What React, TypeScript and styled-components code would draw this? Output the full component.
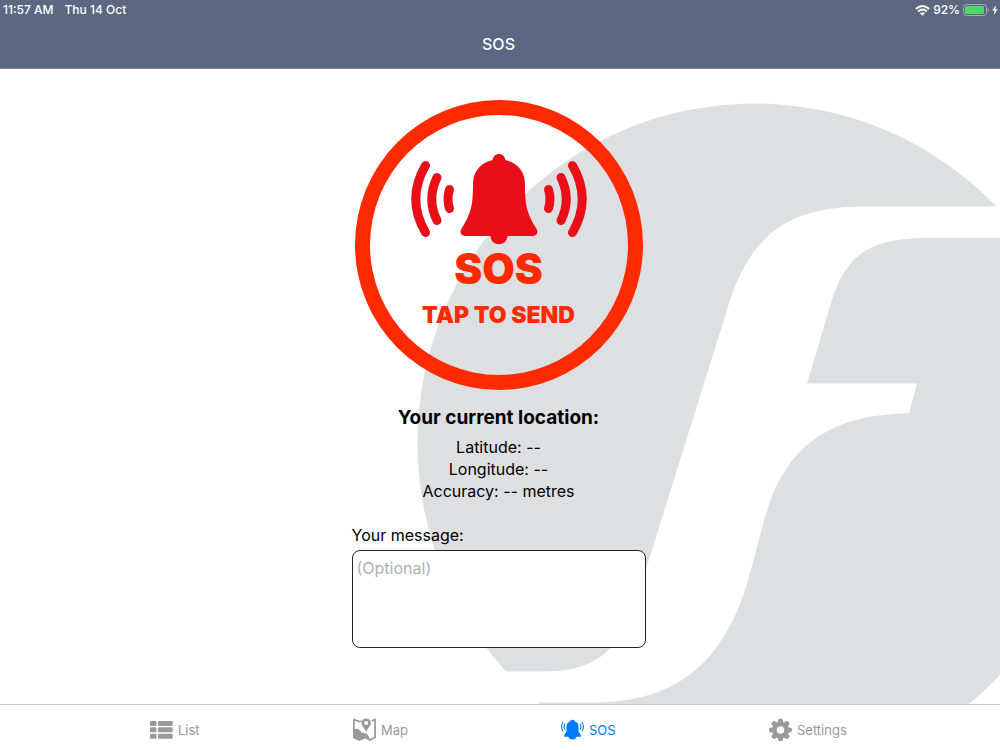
import React from "react";
import styled, { createGlobalStyle } from "styled-components";

const GlobalStyle = createGlobalStyle`
  *, *::before, *::after { box-sizing: border-box; }
  html, body { margin: 0; }
  body {
    background: #fff;
    color: #000;
    font-family: Inter, "Liberation Sans", sans-serif;
  }
`;

const Screen = styled.div`
  display: flex;
  flex-direction: column;
  min-height: 100vh;
`;

const Header = styled.header`
  height: 69px;
  background: #5c6781;
  border-bottom: 1px solid #7d8699;
  color: #fff;
`;

const StatusBar = styled.div`
  display: flex;
  align-items: center;
  justify-content: space-between;
  height: 20px;
  padding: 0 2px 0 3px;
  font-size: 12px;
  font-weight: 500;
  line-height: 20px;
`;

const StatusGroup = styled.div<{ $gap: number }>`
  display: flex;
  align-items: center;
  gap: ${(p) => p.$gap}px;
`;

const Title = styled.h1`
  margin: 0;
  padding-right: 3px;
  font-size: 16px;
  font-weight: 500;
  line-height: 48px;
  text-align: center;
`;

const Main = styled.main`
  position: relative;
  flex: 1;
  display: flex;
  flex-direction: column;
  align-items: center;
  padding: 31px 3px 24px 0;
  overflow: hidden;
`;

const Watermark = styled.svg`
  position: absolute;
  top: 0;
  right: 0;
  z-index: -1;
`;

const SosButton = styled.button`
  display: flex;
  flex-direction: column;
  align-items: center;
  width: 288px;
  height: 290px;
  padding: 38px 0 0;
  border: 15px solid #ff2a00;
  border-radius: 50%;
  background: transparent;
  color: #ff2a00;
  font-family: Inter, "Liberation Sans", sans-serif;
  font-weight: 900;
  cursor: pointer;
`;

const SosWord = styled.span`
  margin-top: 4px;
  font-size: 42px;
  line-height: 40px;
`;

const SosHint = styled.span`
  margin-top: 14px;
  font-size: 23px;
  line-height: 24px;
`;

const Location = styled.section`
  padding-top: 16px;
  text-align: center;
`;

const LocationTitle = styled.h2`
  margin: 0 0 6px;
  font-size: 19px;
  font-weight: 700;
  line-height: 24px;
`;

const LocationLine = styled.p`
  margin: 0;
  font-size: 16px;
  line-height: 22px;
`;

const MessageForm = styled.div`
  display: flex;
  flex-direction: column;
  width: 294px;
  margin-top: 21px;
`;

const MessageLabel = styled.label`
  font-size: 16px;
  line-height: 24px;
  margin-bottom: 3px;
`;

const MessageBox = styled.textarea`
  height: 98px;
  padding: 6px 4px;
  border: 1px solid #222;
  border-radius: 8px;
  background: #fff;
  font: inherit;
  font-size: 16px;
  line-height: 23px;
  resize: none;
  &::placeholder { color: #b0b0b2; opacity: 1; }
`;

const TabBar = styled.nav`
  display: grid;
  grid-template-columns: 203fr 208fr 208fr 231fr;
  height: 46px;
  padding: 4px 0 0 15%;
  border-top: 1px solid #c8c8ca;
  background: #fff;
`;

const Tab = styled.a<{ $active?: boolean }>`
  display: flex;
  align-items: center;
  gap: 5px;
  color: ${(p) => (p.$active ? "#007aff" : "#999")};
  font-size: 13px;
  text-decoration: none;
`;

const Waves = () => (
  <g fill="none" stroke="currentColor" strokeWidth="9" strokeLinecap="round">
    <path d="M425.5 165.500Q406 199 425.500 232.500" />
    <path d="M437 177.500Q426.500 199 437 220.500" />
    <path d="M449.500 189.500Q446.500 199 449.500 208.500" />
  </g>
);

const AlarmBell = ({ width, height }: { width: number; height: number }) => (
  <svg width={width} height={height} viewBox="410 153 178 92" aria-hidden="true">
    <Waves />
    <g transform="translate(998 0) scale(-1 1)"><Waves /></g>
    <path
      fill="currentColor"
      d="M492.500 160C480 163 473 172 473 184C473 206 471 213 462 228C459 232 461 236 465 236H490.500C491 247 507 247 507.500 236H533C537 236 539 232 536 228C527 213 525 206 525 184C525 172 518 163 505.500 160C504 152 494 152 492.500 160Z"
    />
  </svg>
);

const BellColor = styled.span`
  display: block;
  height: 92px;
  color: #e90f18;
`;

const ListIcon = () => (
  <svg width="23" height="24" viewBox="0 0 23 24" fill="currentColor" aria-hidden="true">
    {[3, 9.3, 15.7].map((y) => (
      <g key={y}>
        <rect x="0" y={y} width="6.500" height="5" rx="1.200" />
        <rect x="8" y={y} width="14.700" height="5" rx="1.200" />
      </g>
    ))}
  </svg>
);

const MapIcon = () => (
  <svg width="23" height="24" viewBox="0 0 23 24" aria-hidden="true">
    <path d="M8.500 3L6.500 3.600L.9 1.600V19.500L6.500 22L12 19.500L17 22L22.100 19.300V1.600L18.500 3" fill="none" stroke="currentColor" strokeWidth="1.700" />
    <path d="M1 11C4 10 7 11.500 8.500 14.500C11 15 14 15 15.500 18L17 22L12 19.500L6.500 22L1 19.500Z" fill="currentColor" />
    <path fillRule="evenodd" d="M13.200 .4A4.700 4.700 0 0 1 17.900 5.100C17.900 8.500 14.400 10 13.200 14.500C12 10 8.500 8.500 8.500 5.100A4.700 4.700 0 0 1 13.200 .4ZM13.200 3A2 2 0 1 0 13.200 7A2 2 0 1 0 13.200 3Z" fill="currentColor" />
  </svg>
);

const AlarmTabIcon = () => (
  <svg width="23" height="24" viewBox="0 0 23 24" aria-hidden="true">
    <path d="M11.500 1.800C13 1.800 13.600 2.600 14 3.500C16.500 4.300 17.500 6.300 17.500 9V13.500L19.700 16.500V18.800H15.500C15.500 20.300 14 21.500 11.500 21.500C9 21.500 7.500 20.300 7.500 18.800H3.300V16.500L5.500 13.500V9C5.500 6.300 6.500 4.300 9 3.500C9.400 2.600 10 1.800 11.500 1.800Z" fill="currentColor" />
    <g fill="none" stroke="currentColor" strokeWidth="1.100" strokeLinecap="round">
      <path d="M1.800 4.500Q-.7 8.800 1.800 13M3.900 6Q2.200 8.800 3.900 11.500M21.200 4.500Q23.700 8.800 21.200 13M19.100 6Q20.800 8.800 19.100 11.500" />
    </g>
  </svg>
);

const GearIcon = () => (
  <svg width="23" height="24" viewBox="-12 -12 24 24" fill="currentColor" aria-hidden="true">
    <circle r="6.300" fill="none" stroke="currentColor" strokeWidth="4.800" />
    {[0, 45, 90, 135, 180, 225, 270, 315].map((a) => (
      <path key={a} transform={`rotate(${a})`} d="M-3 -8L-2.200 -11Q-2 -11.800 -1.200 -11.800H1.200Q2 -11.800 2.200 -11L3 -8Z" />
    ))}
  </svg>
);

const WifiIcon = () => (
  <svg width="15" height="11" viewBox="0 0 15 11" aria-hidden="true">
    <g fill="none" stroke="#fff" strokeWidth="1.800">
      <path d="M.8 4Q7.500 -2 14.200 4" />
      <path d="M3.100 6.500Q7.500 2.600 11.900 6.500" />
    </g>
    <path d="M5 8.300Q7.500 6.300 10 8.300L7.500 10.800Z" fill="#fff" />
  </svg>
);

const BatteryIcon = () => (
  <svg width="26" height="12" viewBox="0 0 26 12" aria-hidden="true">
    <rect x=".5" y=".5" width="23" height="11" rx="2.800" fill="none" stroke="#a3a9b7" />
    <rect x="2" y="2" width="19" height="8" rx="1.200" fill="#4cd964" />
    <path d="M24.600 4Q26 4.500 26 6T24.600 8Z" fill="#a3a9b7" />
  </svg>
);

const BoltIcon = () => (
  <svg width="6" height="10" viewBox="0 0 6 10" aria-hidden="true">
    <path d="M4 0L.3 5.600H2.600L1.800 10L5.700 4.200H3.300Z" fill="#fff" />
  </svg>
);

export default function App() {
  return (
    <Screen>
      <GlobalStyle />
      <Header>
        <StatusBar>
          <StatusGroup $gap={11}>
            <span>11:57 AM</span>
            <span>Thu 14 Oct</span>
          </StatusGroup>
          <StatusGroup $gap={3}>
            <WifiIcon />
            <span>92%</span>
            <BatteryIcon />
            <BoltIcon />
          </StatusGroup>
        </StatusBar>
        <Title>SOS</Title>
      </Header>
      <Main>
        <Watermark width="600" height="635" viewBox="400 69 600 635" aria-hidden="true">
          <ellipse cx="754.500" cy="442.500" rx="337" ry="339" fill="#dedfe1" />
          <path
            fill="#fff"
            d="M1010 206.500H866C790 206.500 750 232 727 310L646 569C628 630 615 671 545 671.500H507L480 671V702.500H590C676 703 721 664 746 587C758 547 762 523 771 499C795 437 842 414 909 413.500L917 383.500H807L829 310C842 262 862 238 925 238H1010Z"
          />
        </Watermark>
        <SosButton type="button">
          <BellColor><AlarmBell width={178} height={92} /></BellColor>
          <SosWord>SOS</SosWord>
          <SosHint>TAP TO SEND</SosHint>
        </SosButton>
        <Location>
          <LocationTitle>Your current location:</LocationTitle>
          <LocationLine>Latitude: --</LocationLine>
          <LocationLine>Longitude: --</LocationLine>
          <LocationLine>Accuracy: -- metres</LocationLine>
        </Location>
        <MessageForm>
          <MessageLabel htmlFor="message">Your message:</MessageLabel>
          <MessageBox id="message" placeholder="(Optional)" />
        </MessageForm>
      </Main>
      <TabBar>
        <Tab href="#list"><ListIcon />List</Tab>
        <Tab href="#map"><MapIcon />Map</Tab>
        <Tab href="#sos" $active aria-current="page"><AlarmTabIcon />SOS</Tab>
        <Tab href="#settings"><GearIcon />Settings</Tab>
      </TabBar>
    </Screen>
  );
}
